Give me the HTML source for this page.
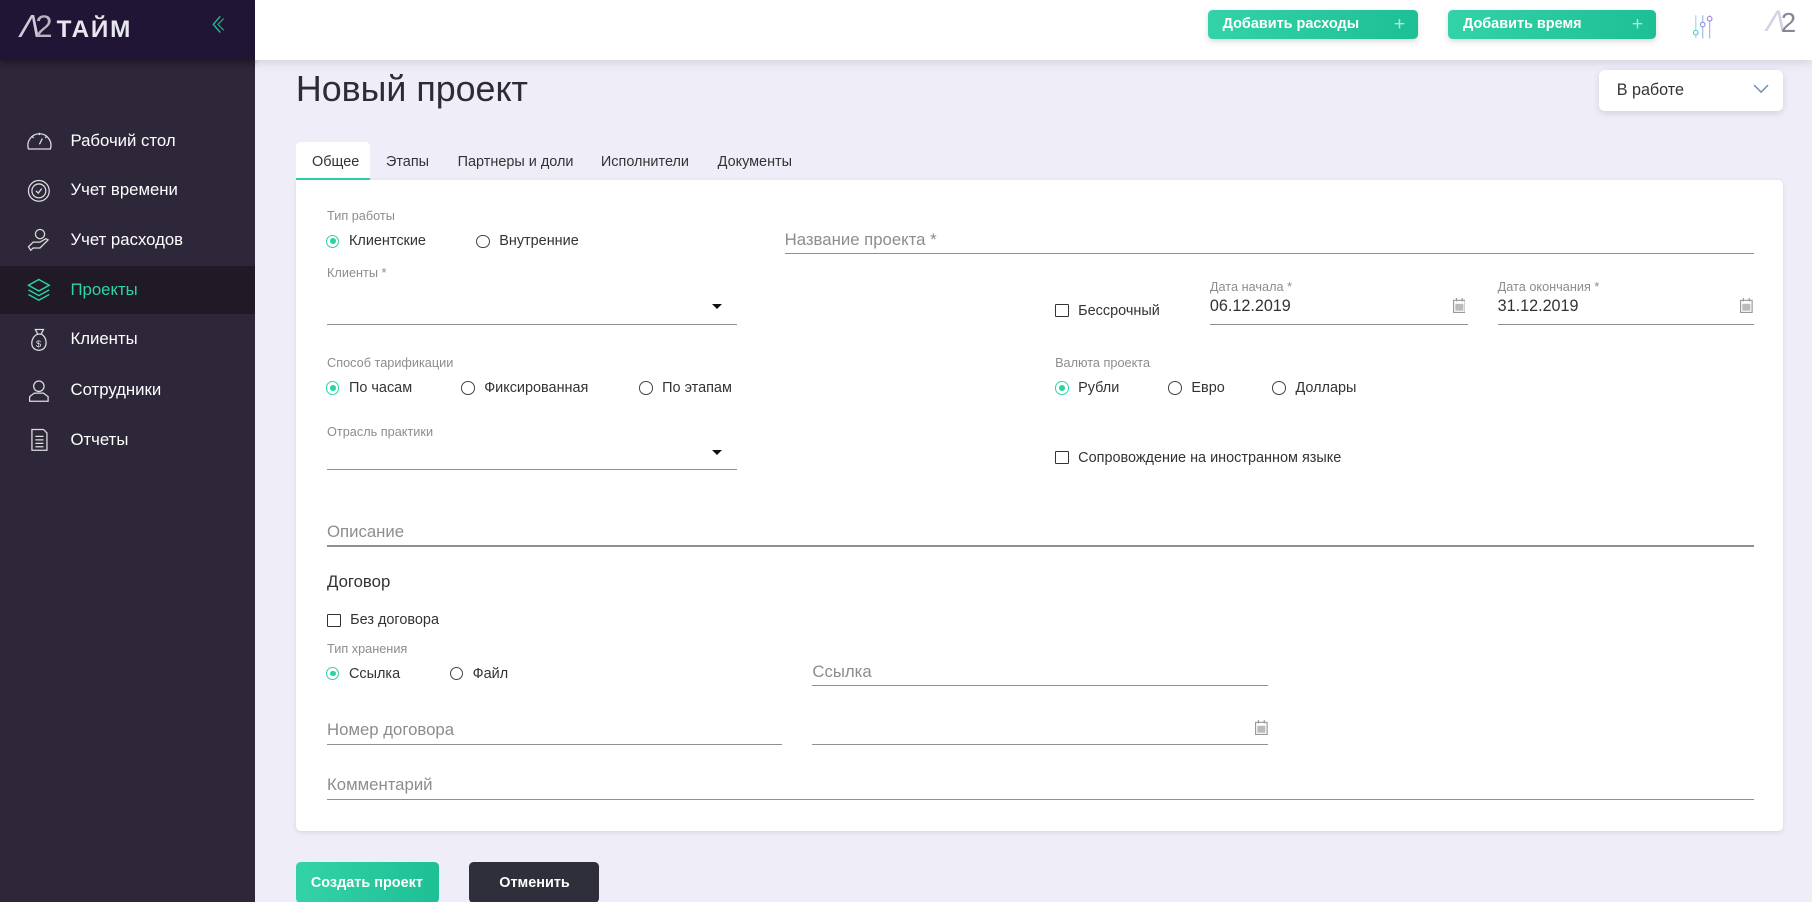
<!DOCTYPE html>
<html><head><meta charset="utf-8"><style>
html,body{margin:0;padding:0;width:1812px;height:902px;overflow:hidden;background:#efedf8}
#r{zoom:1.15561;position:relative;width:1568px;height:781px;font-family:"Liberation Sans","Noto Sans CJK SC",sans-serif;color:#333}
.a{position:absolute;white-space:nowrap}
.side{left:0;top:0;width:221px;height:781px;background:#2e2639}
.sidetop{left:0;top:0;width:221px;height:52px;background:#211535;box-shadow:0 2px 6px rgba(0,0,0,.4)}
.mi{left:0;width:221px;height:42px;color:#fff;font-size:14.5px}
.mi span{position:absolute;left:61px;top:12px}
.mi svg{position:absolute;left:22px;top:9px}
.hdr{left:221px;top:0;width:1347px;height:52px;background:#fff;box-shadow:0 2px 8px rgba(0,0,0,.12)}
.gb{height:25px;border-radius:4px;background:linear-gradient(90deg,#33d3a7,#1dbf94);color:#fff;font-size:12.5px;font-weight:bold;box-shadow:0 2px 5px rgba(0,0,0,.15)}
.gb span{position:absolute;left:13px;top:5px}
.gb i{position:absolute;right:11px;top:2px;font-style:normal;color:#a8ecd8;font-size:17px;font-weight:normal}
.lbl{font-size:11px;color:#8d8d8d}
.t{font-size:12.5px;color:#333}
.ph{font-size:14.5px;color:#8d8d8d}
.ln{height:1px;background:#8f8f8f}
.rad{width:10px;height:10px;border:1px solid #444;border-radius:50%}
.rad.on{border-color:#2dd3a6}
.rad.on:after{content:"";position:absolute;left:2.5px;top:2.5px;width:5px;height:5px;border-radius:50%;background:#2dd3a6}
.cb{width:10px;height:10px;border:1.3px solid #333;border-radius:1px}
.caret{width:0;height:0;border-left:4.5px solid transparent;border-right:4.5px solid transparent;border-top:4.5px solid #111}
.tab{font-size:12.5px;color:#333;top:133px}
</style></head><body><div id="r">
<div class="a side"></div>
<div class="a sidetop"></div>
<div class="a" style="left:17px;top:9px;font-size:27px;line-height:30px;color:#d8d5de;letter-spacing:0.5px">
<span style="font-style:italic;color:#cfcbd8">Λ</span><span style="color:#b9b3c4;margin-left:-5px">2</span><span style="font-size:21px;margin-left:3px;color:#e8e6ee;font-weight:bold;letter-spacing:1.5px">ТАЙМ</span></div>
<svg class="a" style="left:183px;top:12px" width="12" height="18" viewBox="0 0 12 18"><path d="M8 2 L2 9 L8 16" fill="none" stroke="#1fb38e" stroke-width="1.3"/><path d="M11 4 L6 9 L11 14" fill="none" stroke="#1fb38e" stroke-width="1"/></svg>

<div class="a mi" style="top:101px"><svg width="25" height="24" viewBox="0 0 25 24" fill="none" stroke="#ddd" stroke-width="1.1"><path d="M3 19 A10 10 0 1 1 22 19 Z"/><path d="M12.5 15 L15 10"/><path d="M12.5 5v2M6 8l1.5 1.5M19 8l-1.5 1.5"/></svg><span>Рабочий стол</span></div>
<div class="a mi" style="top:144px"><svg width="25" height="24" viewBox="0 0 25 24" fill="none" stroke="#ddd" stroke-width="1.1"><circle cx="12" cy="12" r="9"/><circle cx="12" cy="12" r="6"/><path d="M9.5 12l2 2 3-4"/></svg><span>Учет времени</span></div>
<div class="a mi" style="top:187px"><svg width="25" height="24" viewBox="0 0 25 24" fill="none" stroke="#ddd" stroke-width="1.1"><circle cx="13" cy="7" r="4"/><path d="M3 18l4-4h6l5-3 2 1-7 7H7l-2 2z"/></svg><span>Учет расходов</span></div>
<div class="a" style="left:0;top:230px;width:221px;height:42px;background:#1f1a26"></div>
<div class="a mi" style="top:230px;color:#2dd3a6"><svg width="25" height="24" viewBox="0 0 25 24" fill="none" stroke="#2dd3a6" stroke-width="1.2"><path d="M12 3l9 5-9 5-9-5z"/><path d="M3 12l9 5 9-5"/><path d="M3 16l9 5 9-5"/></svg><span>Проекты</span></div>
<div class="a mi" style="top:273px"><svg width="25" height="24" viewBox="0 0 25 24" fill="none" stroke="#ddd" stroke-width="1.1"><path d="M9 3h7l-2 4h-3z"/><path d="M11 7 C4 10 4 21 12 21 C20 21 20 10 14 7"/><text x="9.5" y="18" font-size="8" fill="#ddd" stroke="none">$</text></svg><span>Клиенты</span></div>
<div class="a mi" style="top:317px"><svg width="25" height="24" viewBox="0 0 25 24" fill="none" stroke="#ddd" stroke-width="1.1"><circle cx="12" cy="8" r="4.5"/><path d="M4 21v-4l4-3h8l4 3v4z"/></svg><span>Сотрудники</span></div>
<div class="a mi" style="top:360px"><svg width="25" height="24" viewBox="0 0 25 24" fill="none" stroke="#ddd" stroke-width="1.1"><path d="M6 3h10l3 3v15H6z"/><path d="M9 9h7M9 12h7M9 15h7M9 18h7"/></svg><span>Отчеты</span></div>

<div class="a hdr"></div>
<div class="a gb" style="left:1045px;top:9px;width:182px"><span>Добавить расходы</span><i>+</i></div>
<div class="a gb" style="left:1253px;top:9px;width:180px"><span>Добавить время</span><i>+</i></div>
<svg class="a" style="left:1462px;top:11px" width="22" height="24" viewBox="0 0 22 24" fill="none" stroke-width="1"><path d="M5 2v13M5 19v3" stroke="#9fd8e8"/><circle cx="5" cy="17" r="2" stroke="#5fc4d8"/><path d="M11 2v6M11 12v10" stroke="#a8b4e8"/><circle cx="11" cy="10" r="2" stroke="#8a9ae0"/><path d="M17 2v1M17 7v15" stroke="#b8a8e8"/><circle cx="17" cy="5" r="2" stroke="#9c88e0"/></svg>
<div class="a" style="left:1528px;top:4px;font-size:26px;color:#d5d2e6;font-style:italic">Λ</div>
<div class="a" style="left:1541px;top:6px;font-size:24px;color:#8a8696">2</div>

<div class="a" style="left:256px;top:60px;font-size:31px;color:#2d2b36">Новый проект</div>
<div class="a" style="left:1384px;top:61px;width:159px;height:35px;background:#fff;border-radius:5px;box-shadow:0 2px 6px rgba(0,0,0,.12)"></div>
<div class="a" style="left:1399px;top:70px;font-size:14px;color:#333">В работе</div>
<svg class="a" style="left:1517px;top:73px" width="14" height="9"><path d="M1 1l6 6 6-6" fill="none" stroke="#6b8aa8" stroke-width="1.2"/></svg>

<div class="a" style="left:256px;top:123px;width:64px;height:31px;background:#fff;border-radius:4px 4px 0 0;border-bottom:2px solid #2dd3a6"></div>
<div class="a tab" style="left:270px">Общее</div>
<div class="a tab" style="left:334px">Этапы</div>
<div class="a tab" style="left:396px">Партнеры и доли</div>
<div class="a tab" style="left:520px">Исполнители</div>
<div class="a tab" style="left:621px">Документы</div>

<div class="a" style="left:256px;top:156px;width:1287px;height:563px;background:#fff;border-radius:0 4px 4px 4px;box-shadow:0 1px 4px rgba(0,0,0,.1)"></div>

<div class="a lbl" style="left:283px;top:180px">Тип работы</div>
<div class="a rad on" style="left:282px;top:203px"></div><div class="a t" style="left:302px;top:202px">Клиентские</div>
<div class="a rad" style="left:412px;top:203px"></div><div class="a t" style="left:432px;top:202px">Внутренние</div>
<div class="a ph" style="left:679px;top:199px">Название проекта *</div>
<div class="a ln" style="left:679px;top:219px;width:839px"></div>

<div class="a lbl" style="left:283px;top:229px">Клиенты *</div>
<div class="a caret" style="left:616px;top:263px"></div>
<div class="a ln" style="left:283px;top:280px;width:355px"></div>

<div class="a cb" style="left:913px;top:263px"></div><div class="a t" style="left:933px;top:262px">Бессрочный</div>
<div class="a lbl" style="left:1047px;top:241px">Дата начала *</div>
<div class="a" style="left:1047px;top:257px;font-size:14px;color:#333">06.12.2019</div>
<div class="a ln" style="left:1047px;top:280px;width:223px"></div>
<div class="a lbl" style="left:1296px;top:241px">Дата окончания *</div>
<div class="a" style="left:1296px;top:257px;font-size:14px;color:#333">31.12.2019</div>
<div class="a ln" style="left:1296px;top:280px;width:222px"></div>
<svg class="a" style="left:1257px;top:258px" width="11" height="13" viewBox="0 0 11 13"><rect x="0.5" y="2" width="10" height="10.5" fill="#fff" stroke="#999"/><path d="M2 5h7v6H2z" fill="#bbb"/><path d="M3 0v3M8 0v3" stroke="#999"/></svg>
<svg class="a" style="left:1506px;top:258px" width="11" height="13" viewBox="0 0 11 13"><rect x="0.5" y="2" width="10" height="10.5" fill="#fff" stroke="#999"/><path d="M2 5h7v6H2z" fill="#bbb"/><path d="M3 0v3M8 0v3" stroke="#999"/></svg>

<div class="a lbl" style="left:283px;top:307px">Способ тарификации</div>
<div class="a rad on" style="left:282px;top:330px"></div><div class="a t" style="left:302px;top:329px">По часам</div>
<div class="a rad" style="left:399px;top:330px"></div><div class="a t" style="left:419px;top:329px">Фиксированная</div>
<div class="a rad" style="left:553px;top:330px"></div><div class="a t" style="left:573px;top:329px">По этапам</div>
<div class="a lbl" style="left:913px;top:307px">Валюта проекта</div>
<div class="a rad on" style="left:913px;top:330px"></div><div class="a t" style="left:933px;top:329px">Рубли</div>
<div class="a rad" style="left:1011px;top:330px"></div><div class="a t" style="left:1031px;top:329px">Евро</div>
<div class="a rad" style="left:1101px;top:330px"></div><div class="a t" style="left:1121px;top:329px">Доллары</div>

<div class="a lbl" style="left:283px;top:367px">Отрасль практики</div>
<div class="a caret" style="left:616px;top:389px"></div>
<div class="a ln" style="left:283px;top:406px;width:355px"></div>
<div class="a cb" style="left:913px;top:390px"></div><div class="a t" style="left:933px;top:389px">Сопровождение на иностранном языке</div>

<div class="a ph" style="left:283px;top:452px">Описание</div>
<div class="a ln" style="left:283px;top:472px;width:1235px"></div>

<div class="a" style="left:283px;top:495px;font-size:14.5px;color:#333">Договор</div>
<div class="a cb" style="left:283px;top:531px"></div><div class="a t" style="left:303px;top:530px">Без договора</div>
<div class="a lbl" style="left:283px;top:555px">Тип хранения</div>
<div class="a rad on" style="left:282px;top:577px"></div><div class="a t" style="left:302px;top:576px">Ссылка</div>
<div class="a rad" style="left:389px;top:577px"></div><div class="a t" style="left:409px;top:576px">Файл</div>
<div class="a ph" style="left:703px;top:573px">Ссылка</div>
<div class="a ln" style="left:703px;top:593px;width:394px"></div>
<div class="a ph" style="left:283px;top:623px">Номер договора</div>
<div class="a ln" style="left:283px;top:644px;width:394px"></div>
<div class="a ln" style="left:703px;top:644px;width:394px"></div>
<svg class="a" style="left:1086px;top:623px" width="11" height="13" viewBox="0 0 11 13"><rect x="0.5" y="2" width="10" height="10.5" fill="#fff" stroke="#999"/><path d="M2 5h7v6H2z" fill="#bbb"/><path d="M3 0v3M8 0v3" stroke="#999"/></svg>
<div class="a ph" style="left:283px;top:671px">Комментарий</div>
<div class="a ln" style="left:283px;top:691px;width:1235px"></div>

<div class="a" style="left:256px;top:746px;width:124px;height:35px;border-radius:4px;background:linear-gradient(90deg,#33d3a7,#1dbf94)"></div>
<div class="a" style="left:269px;top:757px;color:#fff;font-size:12.5px;font-weight:bold">Создать проект</div>
<div class="a" style="left:406px;top:746px;width:112px;height:35px;border-radius:4px;background:#2e2f3a"></div>
<div class="a" style="left:432px;top:757px;color:#fff;font-size:12.5px;font-weight:bold">Отменить</div>
</div></body></html>
